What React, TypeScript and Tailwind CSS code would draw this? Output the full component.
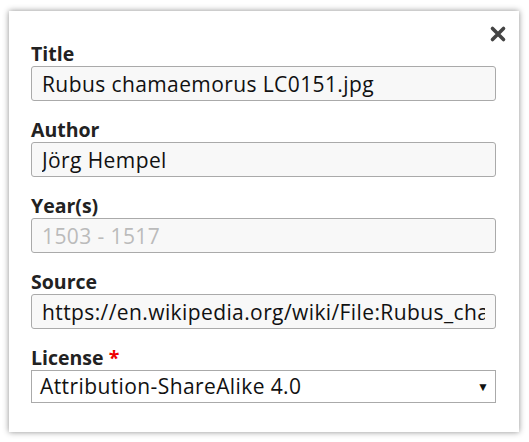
import React from 'react';

const fields = [
  { label: 'Title', value: 'Rubus chamaemorus LC0151.jpg' },
  { label: 'Author', value: 'Jörg Hempel' },
  { label: 'Year(s)', value: '', placeholder: '1503 - 1517' },
  { label: 'Source', value: 'https://en.wikipedia.org/wiki/File:Rubus_chamaemorus_LC0151.jpg' },
];

export default function App() {
  return (
    <div className="min-h-[442px] w-[529px] bg-white pl-[9px] pt-[11px] font-['Open_Sans',sans-serif]">
      <div className="relative w-[510px] bg-white pl-[22px] pr-[23px] pt-[31px] pb-[29px] shadow-[0_0_6px_rgba(0,0,0,0.45)]">
        <button
          type="button"
          aria-label="Close"
          className="absolute right-[12px] top-[14px] flex h-[18px] w-[18px] items-center justify-center text-[#444]"
        >
          <svg viewBox="0 0 18 18" className="h-[18px] w-[18px]">
            <path d="M3.5 3.5 L14.5 14.5 M14.5 3.5 L3.5 14.5" stroke="currentColor" strokeWidth="3.6" strokeLinecap="round" />
          </svg>
        </button>
        <div className="flex flex-col">
          {fields.map((f) => (
            <div key={f.label} className="mb-[17px] flex flex-col">
              <label className="text-[19.5px] font-bold leading-[24px] text-[#222]">{f.label}</label>
              <input
                readOnly
                value={f.value}
                placeholder={f.placeholder}
                className="h-[35px] w-full rounded-[3px] border border-[#aaa] bg-[#f8f8f8] px-[10px] text-[21px] tracking-[0.4px] text-[#111] outline-none placeholder:text-[#bbb]"
              />
            </div>
          ))}
          <div className="flex flex-col">
            <label className="text-[19.5px] font-bold leading-[24px] text-[#222]">
              License <span className="text-[#e00]">*</span>
            </label>
            <div className="relative h-[33px] w-full border border-[#aaa] bg-white">
              <div className="px-[8px] text-[21px] leading-[31px] tracking-[0.4px] text-[#111]">Attribution-ShareAlike 4.0</div>
              <span className="absolute right-[6px] top-[10px] text-[12px] leading-none text-[#111]">▼</span>
            </div>
          </div>
        </div>
      </div>
    </div>
  );
}
